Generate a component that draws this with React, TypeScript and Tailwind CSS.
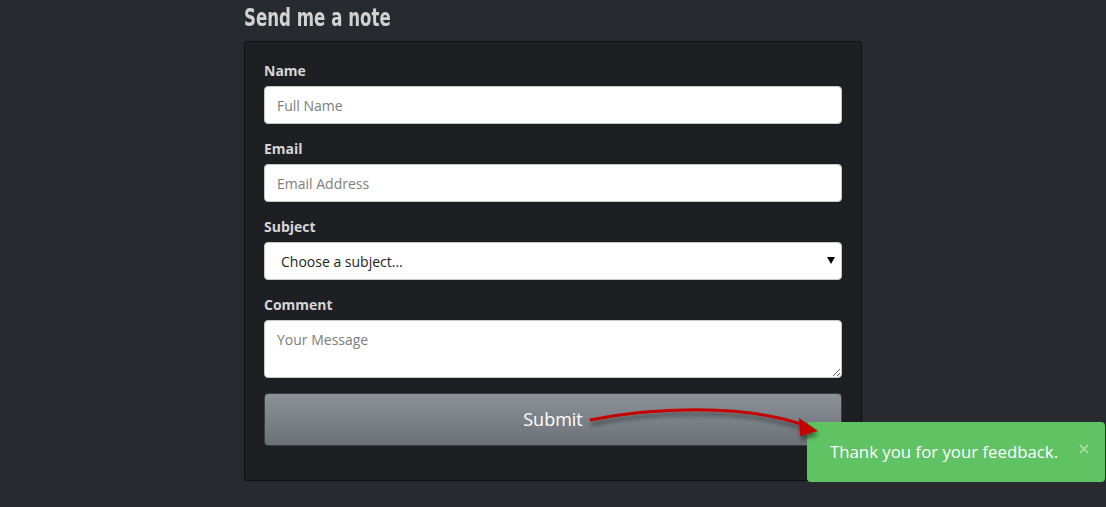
import { X } from 'lucide-react'

const body = { fontFamily: '"Open Sans", "Liberation Sans", sans-serif' }

function Field({ label, children }: { label: string; children: React.ReactNode }) {
  return (
    <div className="flex flex-col">
      <label className="mb-[7px] text-[14px] font-bold leading-[16px] text-[#d6d6d6]">{label}</label>
      {children}
    </div>
  )
}

export default function App() {
  const inputCls =
    'h-[38px] w-full rounded-[4px] border border-[#c8c8c8] bg-white px-[12px] text-[14px] text-[#333] outline-none placeholder:text-[#7d7d7d]'

  return (
    <div className="relative h-[507px] w-full overflow-hidden bg-[#272a2f]" style={body}>
      <div className="mx-auto w-[618px] pt-[5px]">
        <h2
          className="h-[36px] origin-left scale-x-[0.77] whitespace-nowrap text-[24px] font-bold leading-[26px] text-[#d2d2d2]"
          style={{ fontFamily: '"DejaVu Sans Condensed", "DejaVu Sans", sans-serif' }}
        >
          Send me a note
        </h2>

        <div className="rounded-[3px] border border-[#0e0f11] bg-[#1e1f22] px-[19px] pb-[34px] pt-[21px]">
          <form className="flex flex-col gap-[17px]" onSubmit={(e) => e.preventDefault()}>
            <Field label="Name">
              <input className={inputCls} placeholder="Full Name" />
            </Field>
            <Field label="Email">
              <input className={inputCls} placeholder="Email Address" />
            </Field>
            <Field label="Subject">
              <div className="relative">
                <select
                  className="h-[38px] w-full appearance-none rounded-[4px] border border-[#c8c8c8] bg-white pl-[16px] text-[14px] text-[#222] outline-none"
                  defaultValue=""
                >
                  <option value="">Choose a subject...</option>
                </select>
                <span className="pointer-events-none absolute right-[7px] top-[15px] h-0 w-0 border-x-[4px] border-t-[7px] border-x-transparent border-t-black" />
              </div>
            </Field>
            <Field label="Comment">
              <textarea
                className="h-[58px] w-full rounded-[4px] border border-[#c8c8c8] bg-white px-[12px] py-[8px] text-[14px] text-[#333] outline-none placeholder:text-[#7d7d7d]"
                placeholder="Your Message"
              />
            </Field>
            <button
              type="submit"
              className="mt-[-2px] h-[53px] w-full rounded-[4px] border border-[#3a3d41] bg-gradient-to-b from-[#8c9298] to-[#6b7176] text-[18px] text-white"
            >
              Submit
            </button>
          </form>
        </div>
      </div>

      {/* toast */}
      <div className="absolute left-[807px] top-[422px] flex h-[60px] w-[298px] items-center rounded-[4px] bg-[#5fc263] pl-[23px] pr-[14px] text-[16.8px] text-white">
        <span className="flex-1 whitespace-nowrap">Thank you for your feedback.</span>
        <X className="mb-[6px] h-[14px] w-[14px] text-[#9ad89b]" strokeWidth={4} />
      </div>

      {/* red arrow pointing at the toast, drawn over it */}
      <svg className="pointer-events-none absolute left-0 top-0" width="1106" height="507">
        <defs>
          <filter id="sh" x="-10%" y="-50%" width="120%" height="200%">
            <feDropShadow dx="1" dy="4" stdDeviation="2" floodColor="#000" floodOpacity="0.45" />
          </filter>
        </defs>
        <g filter="url(#sh)">
          <path d="M590 420 C 650 408, 740 403, 804 425" fill="none" stroke="#c40000" strokeWidth="3" />
          <path d="M799 418 L818 431 L800 436 Z" fill="#c40000" />
        </g>
      </svg>
    </div>
  )
}
